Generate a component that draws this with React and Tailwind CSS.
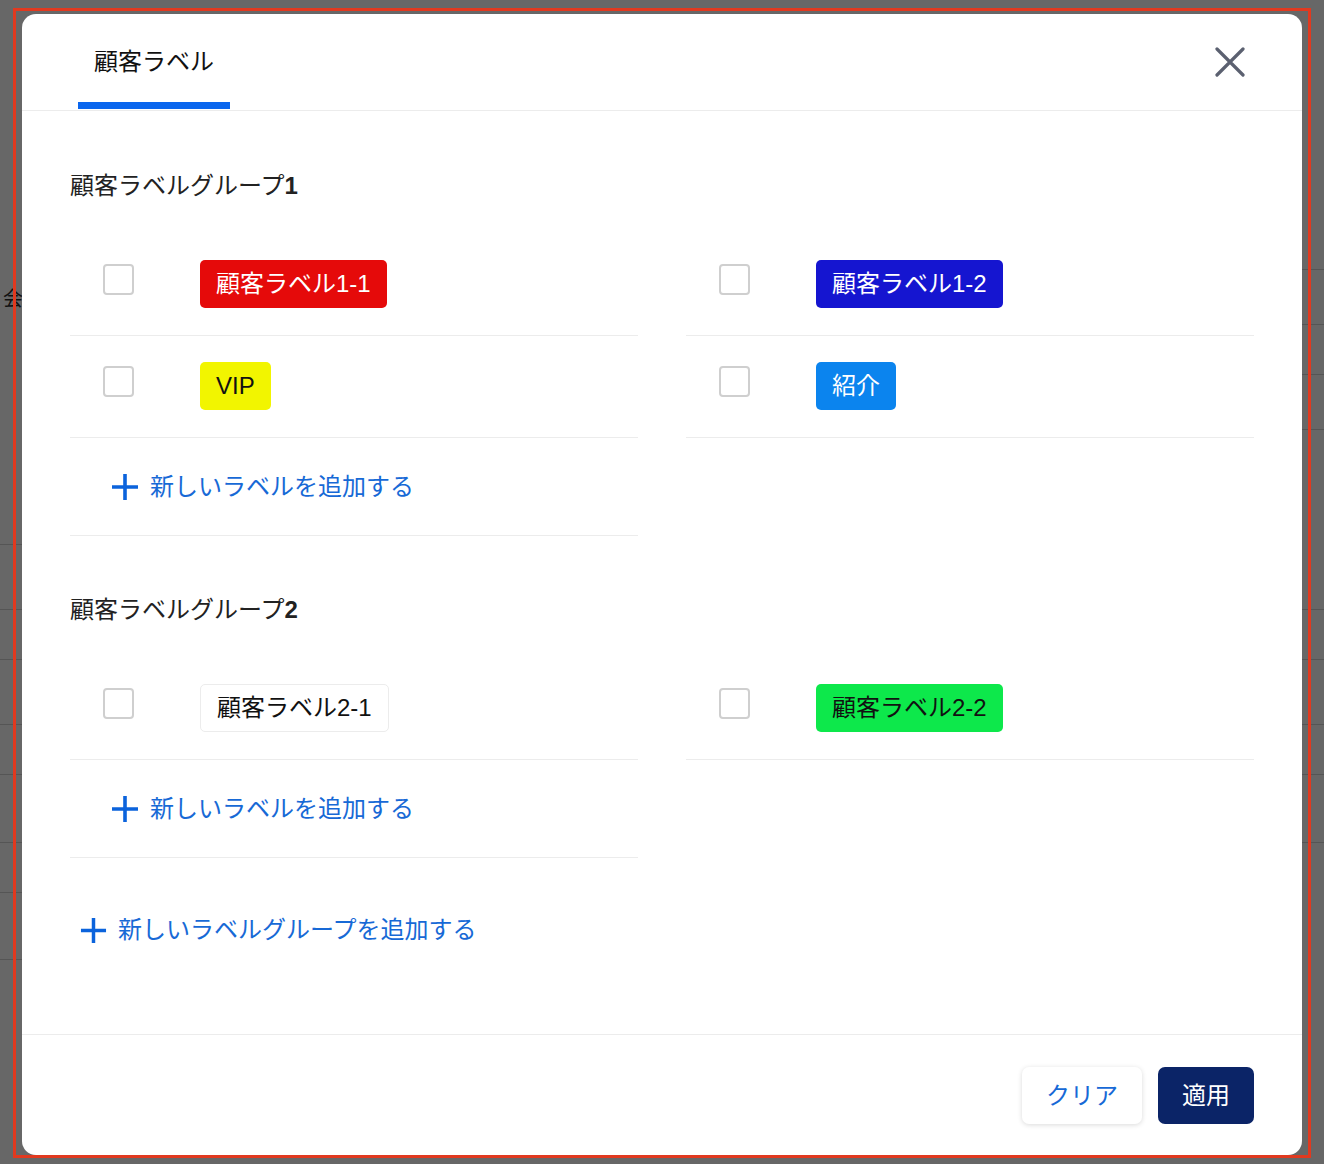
import React from 'react';

const font = "font-['Liberation_Sans','Noto_Sans_CJK_JP',sans-serif]";

const groups = [
  {
    title: '顧客ラベルグループ',
    num: '1',
    labels: [
      { name: '顧客ラベル1-1', cls: 'bg-[#e50a0a] text-white' },
      { name: '顧客ラベル1-2', cls: 'bg-[#1515d0] text-white' },
      { name: 'VIP', cls: 'bg-[#f2f500] text-[#111]' },
      { name: '紹介', cls: 'bg-[#0b84ee] text-white' },
    ],
  },
  {
    title: '顧客ラベルグループ',
    num: '2',
    labels: [
      { name: '顧客ラベル2-1', cls: 'bg-white text-[#111] border border-[#ececec]' },
      { name: '顧客ラベル2-2', cls: 'bg-[#0de84b] text-[#111]' },
    ],
  },
];

function Plus({ size = 28 }) {
  return (
    <svg width={size} height={size} viewBox="0 0 28 28" className="shrink-0">
      <path d="M14 1v26M1 14h26" stroke="#0b63dc" strokeWidth="3.6" fill="none" />
    </svg>
  );
}

function LabelRow({ label }) {
  return (
    <div className="h-[102px] border-b border-[#ececec] flex items-start pt-[26px]">
      <div className="ml-[33px] mt-[4px] w-[31px] h-[31px] rounded-[4px] border-2 border-[#cfcfcf] bg-white shrink-0" />
      <div className={`ml-[66px] h-[48px] px-4 rounded-[5px] flex items-center text-[24px] ${label.cls}`}>{label.name}</div>
    </div>
  );
}

function AddLabel() {
  return (
    <div className="h-[98px] border-b border-[#ececec] flex items-center pl-[41px] gap-[11px] text-[24px] text-[#1769d6] pt-[1px]">
      <Plus />
      <span>新しいラベルを追加する</span>
    </div>
  );
}

function Group({ group, first }) {
  return (
    <div className={first ? 'pt-[59px]' : 'pt-[58px]'}>
      <div className="h-8 leading-8 text-[24px] text-[#222]">
        {group.title}<span className="font-bold">{group.num}</span>
      </div>
      <div className="mt-8 grid grid-cols-2 gap-x-12">
        {group.labels.map(l => <LabelRow key={l.name} label={l} />)}
        <AddLabel />
      </div>
    </div>
  );
}

function Background() {
  const left = [290, 545, 610, 660, 725, 775, 843, 893, 960];
  const right = [270, 325, 375, 430, 610, 660, 725, 775, 843];
  const col = (ys, glyph) => (
    <div className="flex flex-col">
      {ys.map((y, i) => (
        <div key={y} style={{ height: y - (i ? ys[i - 1] : 0) }} className={`${glyph && i === 0 ? '' : 'border-b border-[#555]'} flex items-end`}>
          {glyph && i === 0 && <span className="text-[20px] text-[#111] pl-[3px] leading-[30px] -mb-[24px]">会</span>}
        </div>
      ))}
    </div>
  );
  return (
    <div className="grid grid-cols-2 h-full">
      {col(left, true)}
      {col(right, false)}
    </div>
  );
}

export default function App() {
  return (
    <div className={`relative w-[1324px] h-[1164px] bg-[#676767] overflow-hidden ${font}`}>
      <Background />
      <div className="absolute left-[13px] top-[8px] w-[1298px] h-[1150px] border-[3px] border-[#e1391f]">
        <div className="ml-[6px] mt-[3px] w-[1280px] h-[1141px] bg-white rounded-[14px] flex flex-col overflow-hidden">
          <div className="h-[97px] border-b border-[#ececec] flex shrink-0">
            <div className="ml-[56px] w-[152px] flex flex-col items-center">
              <div className="mt-8 h-8 leading-8 text-[24px] text-[#111]">顧客ラベル</div>
              <div className="mt-auto mb-[1px] w-full h-[7px] bg-[#0a66ee]" />
            </div>
            <div className="ml-auto mr-[57px] flex items-center">
              <svg width="30" height="30" viewBox="0 0 30 30">
                <path d="M2 2l26 26M28 2L2 28" stroke="#5b6070" strokeWidth="3.2" strokeLinecap="round" />
              </svg>
            </div>
          </div>
          <div className="flex-1 px-12">
            {groups.map((g, i) => <Group key={g.num} group={g} first={i === 0} />)}
            <div className="mt-[56px] h-8 flex items-center pl-[10px] gap-[11px] text-[24px] text-[#1769d6]">
              <Plus size={27} />
              <span>新しいラベルグループを追加する</span>
            </div>
          </div>
          <div className="border-t border-[#ececec] pt-8 pb-[31px] pr-12 flex justify-end gap-4 shrink-0">
            <button className="h-[57px] px-6 rounded-[7px] bg-white shadow-[0_1px_5px_rgba(0,0,0,0.15)] text-[24px] text-[#1769d6]">クリア</button>
            <button className="h-[57px] px-6 rounded-[7px] bg-[#0b2467] text-[24px] text-white">適用</button>
          </div>
        </div>
      </div>
    </div>
  );
}
